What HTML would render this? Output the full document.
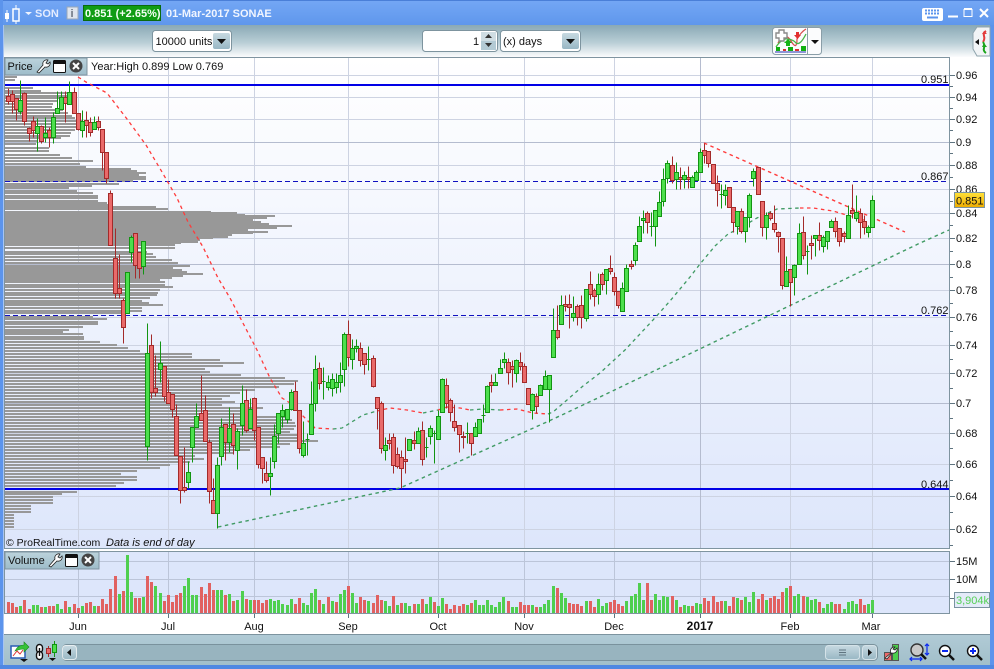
<!DOCTYPE html>
<html lang="en">
<head>
<meta charset="utf-8">
<title>SON chart</title>
<style>
html,body{margin:0;padding:0;background:#fff;width:994px;height:669px;overflow:hidden}
svg{display:block;font-family:"Liberation Sans",Arial,sans-serif}
text{font-size:11px;fill:#111}
.b{font-weight:bold}
</style>
</head>
<body>
<svg width="994" height="669" viewBox="0 0 994 669" xmlns="http://www.w3.org/2000/svg">
<defs>
<linearGradient id="tb" x1="0" y1="0" x2="0" y2="1"><stop offset="0" stop-color="#74a7f5"/><stop offset="1" stop-color="#5f97ec"/></linearGradient>
<linearGradient id="tool" x1="0" y1="0" x2="0" y2="1"><stop offset="0" stop-color="#8aa9b5"/><stop offset=".55" stop-color="#b9ced6"/><stop offset="1" stop-color="#fbfcfd"/></linearGradient>
<linearGradient id="bg" x1="0" y1="0" x2="0" y2="1"><stop offset="0" stop-color="#ffffff"/><stop offset="1" stop-color="#dde6fb"/></linearGradient>
<linearGradient id="leg" x1="0" y1="0" x2="0" y2="1"><stop offset="0" stop-color="#bcd3dc"/><stop offset="1" stop-color="#9dbcc9"/></linearGradient>
<linearGradient id="stat" x1="0" y1="0" x2="0" y2="1"><stop offset="0" stop-color="#b1cbd6"/><stop offset="1" stop-color="#a2bfca"/></linearGradient>
<linearGradient id="yel" x1="0" y1="0" x2="0" y2="1"><stop offset="0" stop-color="#ffe13a"/><stop offset="1" stop-color="#eeac00"/></linearGradient>
<linearGradient id="btn" x1="0" y1="0" x2="0" y2="1"><stop offset="0" stop-color="#c7d9e1"/><stop offset="1" stop-color="#98b7c4"/></linearGradient>
</defs>

<rect width="994" height="669" fill="#fff"/>
<!-- title bar -->
<rect width="994" height="25" fill="url(#tb)"/>
<rect width="994" height="1" fill="#4a7fd8"/>
<!-- window borders -->
<rect x="0" y="0" width="3" height="669" fill="#5c94ec"/>
<rect x="3" y="25" width="1" height="640" fill="#a7c4f2"/>
<rect x="990" y="25" width="4" height="644" fill="#5c94ec"/>
<rect x="0" y="665" width="994" height="4" fill="#4f88e2"/>
<!-- toolbar -->
<rect x="4" y="25" width="986" height="32" fill="url(#tool)"/>

<!-- title contents -->
<path d="M5 13h4v6H5zM8 15h1" fill="#fff"/>
<path d="M7 10v12" stroke="#fff"/>
<path d="M13 9h6v12h-6z" fill="none" stroke="#fff" stroke-width="1.500"/>
<path d="M16 5v4M16 21v3" stroke="#fff"/>
<path d="M25 12h7l-3.500 3z" fill="#eef3ff"/>
<text x="35" y="17" class="b" style="font-size:11px;fill:#e4ecff">SON</text>
<rect x="67" y="7" width="11" height="12" fill="#dfe5ee" stroke="#9aa8b8"/>
<text x="70.500" y="17" class="b" style="font-size:11px;fill:#6a7380">i</text>
<rect x="83.500" y="5.500" width="77" height="15" fill="#0f9c14" stroke="#0a6a0e"/>
<text x="85" y="17" class="b" style="font-size:11px;fill:#f3fff3">0.851 (+2.65%)</text>
<text x="166" y="17" class="b" style="font-size:11px;fill:#f0f5ff">01-Mar-2017 SONAE</text>
<!-- keyboard -->
<rect x="922" y="8" width="21" height="13" rx="2" fill="#fff"/>
<path d="M925 10.500h15M925 13.500h15" stroke="#5c94ec" stroke-width="2" stroke-dasharray="2 1"/>
<path d="M927 17.500h11" stroke="#5c94ec" stroke-width="2"/>
<path d="M948 16.500h10" stroke="#fff" stroke-width="2"/>
<rect x="964" y="9.500" width="8" height="7" fill="none" stroke="#fff"/>
<path d="M964 9h8" stroke="#fff" stroke-width="2"/>
<path d="M980 9l8 8M988 9l-8 8" stroke="#fff" stroke-width="2"/>

<!-- toolbar controls -->
<rect x="152.500" y="30.500" width="79" height="21" rx="3" fill="#fff" stroke="#7d949f"/>
<text x="155.500" y="45" style="font-size:11px">10000 units</text>
<rect x="213" y="33" width="17" height="16" rx="2" fill="url(#btn)"/>
<path d="M217 39h9l-4.500 5z" fill="#111"/>
<rect x="422.500" y="30.500" width="75" height="21" rx="3" fill="#fff" stroke="#7d949f"/>
<text x="473" y="45" style="font-size:11px">1</text>
<rect x="481" y="32" width="15" height="9" fill="#cfdde3"/><rect x="481" y="41" width="15" height="9" fill="#b3cad4"/>
<path d="M485 38h7l-3.500-4zM485 43h7l-3.500 4z" fill="#333"/>
<rect x="500.500" y="30.500" width="80" height="21" rx="3" fill="#fff" stroke="#7d949f"/>
<text x="503" y="45" style="font-size:11px">(x) days</text>
<rect x="562" y="33" width="17" height="16" rx="2" fill="url(#btn)"/>
<path d="M566 39h9l-4.500 5z" fill="#111"/>
<!-- indicator button -->
<rect x="772.500" y="27.500" width="49" height="27" rx="3" fill="#fbfcfd" stroke="#8a9ea8"/>
<path d="M807.500 28v26" stroke="#8a9ea8"/>
<path d="M778 43q7-12 13-2t6-2q4-7 9-10" fill="none" stroke="#d84f4f" stroke-width="1.300"/>
<path d="M776 47q6-9 12-8t8 4q4 3 10-9" fill="none" stroke="#47b447" stroke-width="1.300"/>
<path d="M776 33h3v-3h5v3h3v5h-3v3h-5v-3h-3z" fill="#fff" stroke="#8a8a8a" stroke-width="1.400"/>
<path d="M786 46v-3h-2l4-4 4 4h-2v3z" fill="#18b418"/>
<path d="M796 32h3v3h2l-3.500 4-3.500-4h2z" fill="#e23030"/>
<path d="M776 47h4v4h-4zM788 47h5v4h-5zM801 46h5v5h-5z" fill="#10b010"/>
<path d="M783 49h3v2h-3zM795 49h4v2h-4z" fill="#d83030"/>
<path d="M775 52h31" stroke="#2030b0"/>
<path d="M811 40h8l-4 4z" fill="#111"/>
<!-- right tab -->
<path d="M990 27h-13l-4 6v16l4 7h13z" fill="#f1f4f6" stroke="#8fa4ad"/>
<path d="M979 39l-4 3 4 3z" fill="#111"/>
<path d="M986 31q-3 2-2 5t-1 6" fill="none" stroke="#e23b3b" stroke-width="2"/>
<path d="M982 34l2-3 3 3" fill="#e23b3b"/>
<path d="M986 53q-3-2-2-5t-1-6" fill="none" stroke="#1ca51c" stroke-width="2"/>
<path d="M982 47l2-4 3 4" fill="#1ca51c"/>

<!-- price panel -->
<rect x="5" y="58" width="945" height="490" fill="url(#bg)"/>
<g stroke="#cdd3e2" fill="none">
<path d="M5 75.500H950M5 97.500H950M5 119.500H950M5 165.500H950M5 189.500H950M5 213.500H950M5 238.500H950M5 290.500H950M5 317.500H950M5 345.500H950M5 373.500H950M5 433.500H950M5 464.500H950M5 496.500H950M5 529.500H950"/>
<path d="M78.500 58V548M168.500 58V548M254.500 58V548M348.500 58V548M438.500 58V548M524.500 58V548M614.500 58V548M790.500 58V548M872.500 58V548"/>
</g>
<g stroke="#b5bccf" fill="none"><path d="M5 142.500H950M5 264.500H950M5 403.500H950M700.500 58V548"/></g>

<!-- volume profile -->
<path fill="none" stroke="#989898" stroke-width="2" shape-rendering="crispEdges" d="M5 77H17M5 80H15M5 88H33M5 91H41M5 93H67M5 96H67M5 98H60M5 101H57M5 104H53M5 107H52M5 110H63M5 113H68M5 116H72M5 118H75M5 121H83M5 124H82M5 127H78M5 130H75M5 133H71M5 136H70M5 138H61M5 141H37M5 144H36M5 148H49M5 151H49M5 155H60M5 158H72M5 161H93M5 164H80M5 167H86M5 169H131M5 171H137M5 173H146M5 175H139M5 177H146M5 179H146M5 181H133M5 184H119M5 186H92M5 188H69M5 191H77M5 193H93M5 196H98M5 198H98M5 201H98M5 203H107M5 205H110M5 207H156M5 209H168M5 212H211M5 213H237M5 215H245M5 216H275M5 218H267M5 220H253M5 222H261M5 224H269M5 226H292M5 228H277M5 230H248M5 232H268M5 233H253M5 235H232M5 237H228M5 238H213M5 240H200M5 242H198M5 243H181M5 245H175M5 248H175M5 252H147M5 254H153M5 257H156M5 260H172M5 263H178M5 266H190M5 268H173M5 270H182M5 272H187M5 274H203M5 276H183M5 278H172M5 280H160M5 282H165M5 285H165M5 287H173M5 290H160M5 293H158M5 295H157M5 298H150M5 301H142M5 303H149M5 305H163M5 308H142M5 311H142M5 313H122M5 317H93M5 319H107M5 322H98M5 324H98M5 327H83M5 330H69M5 332H63M5 334H83M5 337H84M5 339H84M5 342H100M5 345H117M5 348H128M5 351H140M5 354H192M5 357H192M5 360H220M5 363H244M5 366H223M5 369H205M5 372H210M5 375H241M5 378H285M5 381H298M5 384H294M5 387H279M5 390H255M5 393H240M5 396H230M5 399H222M5 402H235M5 405H222M5 408H263M5 411H255M5 414H240M5 417H285M5 420H292M5 423H295M5 426H296M5 429H294M5 432H290M5 435H297M5 438H298M5 441H318M5 444H290M5 447H280M5 450H250M5 453H233M5 456H195M5 459H204M5 462H190M5 465H170M5 468H160M5 471H137M5 474H121M5 477H137M5 480H137M5 483H124M5 486H116M5 492H77M5 494H62M5 497H53M5 500H53M5 503H53M5 506H31M5 509H31M5 512H31M5 515H14M5 518H14M5 521H14M5 524H14M5 527H14"/>

<!-- horizontals -->
<path d="M5 181.500H950M5 315.500H950" stroke="#1010c0" stroke-dasharray="5 3" fill="none"/>
<path d="M5 85H950M5 489H950" stroke="#0000e6" stroke-width="2" fill="none"/>

<!-- dashed moving averages and trends -->
<g fill="none" stroke-width="1.300" stroke-dasharray="3.500 3.500">
<path stroke="#ff3b3b" d="M78 77L86 82L107 93L127 119L146 145L162 172L177 198L188 222L203 247L218 278L230 298L245 327L257 350L270 378L282 398L290 403L297 410L304 417L311 424L315 428L333 429"/>
<path stroke="#3f9a63" d="M333 429L342 428L355 420L363 415L377 411"/>
<path stroke="#ff3b3b" d="M377 411L390 408L407 410L423 413"/>
<path stroke="#3f9a63" d="M423 413L438 410"/>
<path stroke="#ff3b3b" d="M438 410L447 407L460 408L470 410"/>
<path stroke="#3f9a63" d="M470 410L483 409L500 410"/>
<path stroke="#ff3b3b" d="M500 410L517 409L533 413L548 414"/>
<path stroke="#3f9a63" d="M548 414L553 412L567 400L583 386L600 373L625 350L653 320L670 301L690 277L700 264L715 246L728 234L740 228L757 218L770 212L777 209L800 208"/>
<path stroke="#ff3b3b" d="M800 208L813 208L833 211L850 216L867 221"/>
<path stroke="#3f9a63" stroke-width="1.400" d="M218 527L400 488L549 421L600 397L760 320L918 244L949 230"/>
<path stroke="#ff3b3b" stroke-width="1.400" d="M704 143L905 232"/>
</g>
<path d="M704.500 143v8" stroke="#ff3b3b"/>

<!-- candles -->
<g transform="translate(.5 .5)" shape-rendering="crispEdges">
<path fill="none" stroke="#a32a2a" d="M8 88V104M12 90V113M16 98V120M24 92V125M29 127V141M33 116V137M41 125V143M49 127V147M65 91V122M74 87V113M78 113V130M86 111V137M90 117V136M98 116V130M102 129V170M106 152V183M110 190V245M115 228V298M119 254V298M123 298V343M135 233V278M139 252V278M151 334V398M155 355V396M164 366V401M168 379V403M172 394V417M176 404V455M180 456V503M184 447V492M201 375V420M205 395V441M209 439V503M213 478V513M225 424V460M233 413V454M246 389V432M254 397V440M258 427V468M262 457V483M266 461V482M295 381V410M299 410V453M319 362V389M348 320V366M360 342V366M364 353V374M373 355V387M377 397V429M381 401V453M389 433V449M393 433V473M397 447V468M401 450V488M405 437V473M414 431V449M422 421V465M446 378V408M450 398V421M454 404V431M459 425V452M463 431V448M471 433V455M491 374V392M508 358V384M512 360V387M520 352V370M524 363V382M528 388V404M536 393V413M557 305V339M565 295V311M569 294V328M577 304V325M581 295V328M590 271V299M594 288V306M602 272V290M610 255V274M614 272V295M618 291V308M631 260V269M647 211V233M672 156V183M680 167V189M688 166V188M704 143V163M708 151V167M713 164V183M717 175V206M729 187V207M733 207V232M741 208V233M758 167V194M762 201V236M770 211V220M774 205V232M778 231V252M782 238V289M790 269V306M803 216V259M811 235V259M819 222V250M835 217V237M839 228V246M844 231V242M852 184V218M860 208V238M864 215V234"/>
<path fill="none" stroke="#129412" d="M20 80V114M37 118V151M45 117V142M53 112V143M57 91V113M61 91V109M69 81V104M82 110V137M94 116V129M131 235V262M143 241V274M147 323V460M160 341V382M188 461V488M192 427V462M196 403V427M217 457V528M221 418V465M229 407V452M237 428V469M242 385V435M250 398V428M270 457V495M274 424V468M278 413V443M282 404V427M287 409V423M291 389V410M303 421V457M307 433V455M311 381V434M315 355V411M323 367V399M328 375V390M332 373V396M336 373V393M340 362V392M344 332V386M352 339V369M356 339V352M368 346V370M385 437V460M418 427V443M426 437V457M430 425V444M434 430V463M438 410V439M442 378V412M467 422V443M475 422V436M483 404V422M487 385V412M495 373V385M500 359V373M504 352V368M516 359V382M532 393V419M540 384V395M545 370V389M549 375V422M553 308V357M561 295V324M573 296V321M586 289V321M598 273V304M606 269V294M622 282V311M626 264V291M635 242V265M639 216V241M643 210V233M651 212V236M655 210V246M659 191V216M663 168V206M667 160V183M676 162V189M684 171V188M692 175V187M696 170V180M700 148V172M721 184V208M725 184V205M737 211V234M745 217V242M749 193V227M753 168V186M766 212V239M786 256V286M794 264V295M799 223V264M807 245V274M815 235V256M823 235V252M827 231V249M831 219V227M848 205V238M856 195V221M868 225V237M872 195V227M305 439h4M321 381h4M366 359h4M424 447h4M432 433h4M465 433h4M481 415h4M649 226h4M719 194h4M805 251h4"/>
<path fill="#e96a6a" stroke="#a32a2a" d="M6 96h4V101h-4zM10 94h4V101h-4zM14 98h4V109h-4zM22 93h4V121h-4zM27 128h4V133h-4zM31 121h4V130h-4zM39 126h4V141h-4zM47 130h4V137h-4zM63 97h4V103h-4zM72 92h4V113h-4zM76 113h4V129h-4zM84 120h4V125h-4zM88 122h4V132h-4zM96 121h4V127h-4zM100 129h4V152h-4zM104 152h4V178h-4zM108 193h4V245h-4zM113 258h4V293h-4zM117 288h4V293h-4zM121 300h4V327h-4zM133 233h4V265h-4zM137 252h4V268h-4zM149 345h4V392h-4zM153 388h4V392h-4zM162 366h4V396h-4zM166 392h4V403h-4zM170 394h4V409h-4zM174 416h4V455h-4zM178 456h4V490h-4zM182 487h4V490h-4zM199 413h4V420h-4zM203 410h4V441h-4zM207 442h4V491h-4zM211 500h4V513h-4zM223 424h4V442h-4zM231 424h4V445h-4zM244 400h4V430h-4zM252 398h4V430h-4zM256 427h4V464h-4zM260 457h4V468h-4zM264 473h4V480h-4zM293 391h4V410h-4zM297 410h4V448h-4zM317 368h4V383h-4zM346 334h4V357h-4zM358 348h4V360h-4zM362 353h4V364h-4zM371 358h4V386h-4zM375 397h4V408h-4zM379 403h4V448h-4zM387 440h4V443h-4zM391 437h4V465h-4zM395 454h4V466h-4zM399 457h4V468h-4zM403 459h4V461h-4zM412 440h4V443h-4zM420 430h4V459h-4zM444 385h4V403h-4zM448 400h4V412h-4zM452 421h4V427h-4zM457 425h4V434h-4zM461 436h4V437h-4zM469 433h4V443h-4zM489 382h4V385h-4zM506 362h4V372h-4zM510 366h4V369h-4zM518 362h4V366h-4zM522 366h4V382h-4zM526 388h4V404h-4zM534 396h4V406h-4zM555 330h4V337h-4zM563 304h4V306h-4zM567 304h4V307h-4zM575 306h4V317h-4zM579 305h4V317h-4zM588 284h4V294h-4zM592 290h4V296h-4zM600 274h4V284h-4zM608 268h4V271h-4zM612 277h4V291h-4zM616 291h4V305h-4zM629 264h4V266h-4zM645 213h4V222h-4zM670 165h4V180h-4zM678 177h4V179h-4zM686 177h4V179h-4zM702 150h4V155h-4zM706 151h4V163h-4zM711 164h4V183h-4zM715 183h4V190h-4zM727 187h4V207h-4zM731 207h4V222h-4zM739 211h4V231h-4zM756 167h4V194h-4zM760 201h4V227h-4zM768 213h4V218h-4zM772 223h4V229h-4zM776 232h4V236h-4zM780 238h4V285h-4zM788 269h4V282h-4zM801 232h4V255h-4zM809 243h4V245h-4zM817 235h4V240h-4zM833 221h4V231h-4zM837 228h4V241h-4zM842 233h4V236h-4zM850 210h4V213h-4zM858 213h4V222h-4zM862 221h4V227h-4z"/>
<path fill="#4ddf4d" stroke="#129412" d="M18 100h4V111h-4zM35 126h4V133h-4zM43 133h4V137h-4zM51 117h4V137h-4zM55 108h4V113h-4zM59 97h4V109h-4zM67 92h4V104h-4zM80 121h4V130h-4zM92 122h4V129h-4zM125 272h4V313h-4zM129 237h4V252h-4zM141 241h4V266h-4zM145 353h4V446h-4zM158 363h4V369h-4zM186 472h4V482h-4zM190 427h4V447h-4zM194 416h4V427h-4zM215 465h4V513h-4zM219 427h4V456h-4zM227 428h4V442h-4zM235 431h4V450h-4zM240 403h4V425h-4zM248 409h4V428h-4zM268 473h4V476h-4zM272 436h4V461h-4zM276 413h4V433h-4zM280 410h4V416h-4zM285 409h4V419h-4zM289 392h4V409h-4zM301 443h4V455h-4zM309 404h4V434h-4zM313 369h4V403h-4zM326 382h4V387h-4zM330 379h4V388h-4zM334 382h4V387h-4zM338 375h4V382h-4zM342 334h4V369h-4zM350 348h4V359h-4zM354 346h4V348h-4zM383 445h4V450h-4zM407 439h4V450h-4zM416 431h4V443h-4zM428 428h4V436h-4zM436 416h4V439h-4zM440 379h4V412h-4zM473 427h4V436h-4zM477 419h4V433h-4zM485 386h4V412h-4zM493 382h4V385h-4zM498 368h4V373h-4zM502 359h4V362h-4zM514 360h4V373h-4zM530 394h4V410h-4zM538 385h4V395h-4zM543 376h4V389h-4zM547 375h4V389h-4zM551 330h4V357h-4zM559 305h4V324h-4zM571 313h4V317h-4zM584 289h4V318h-4zM596 284h4V294h-4zM604 269h4V280h-4zM620 288h4V311h-4zM624 268h4V291h-4zM633 245h4V260h-4zM637 226h4V241h-4zM641 218h4V220h-4zM653 210h4V226h-4zM657 202h4V216h-4zM661 179h4V201h-4zM665 163h4V178h-4zM674 172h4V179h-4zM682 175h4V179h-4zM690 177h4V187h-4zM694 172h4V180h-4zM698 152h4V172h-4zM723 190h4V195h-4zM735 211h4V226h-4zM743 217h4V231h-4zM747 195h4V217h-4zM751 171h4V178h-4zM764 215h4V227h-4zM784 271h4V286h-4zM792 265h4V277h-4zM797 233h4V264h-4zM813 235h4V238h-4zM821 237h4V246h-4zM825 231h4V241h-4zM829 221h4V227h-4zM846 215h4V238h-4zM854 212h4V218h-4zM866 227h4V232h-4zM870 200h4V227h-4z"/>
</g>

<!-- labels on chart -->
<text x="921" y="83">0.951</text>
<text x="921" y="180">0.867</text>
<text x="921" y="314">0.762</text>
<text x="921" y="488">0.644</text>
<text x="6" y="546" style="font-size:10.500px">© ProRealTime.com</text>
<text x="106" y="546" style="font-size:11px;font-style:italic">Data is end of day</text>

<!-- price panel frame -->
<rect x="4.500" y="57.500" width="945" height="491" fill="none" stroke="#7f94a0"/>
<rect x="4" y="548" width="946" height="1" fill="#7f94a0"/>

<!-- legend -->
<rect x="5" y="58" width="82" height="17" fill="url(#leg)" stroke="#7f94a0"/>
<text x="7.500" y="70" style="font-size:11px">Price</text>
<path d="M37 72l6-7a4 4 0 0 1 5-5l-2 3 2 1 2-2a4 4 0 0 1-5 5l-6 6z" fill="#fff" stroke="#222" stroke-width=".8"/>
<rect x="53.500" y="60.500" width="12" height="12" rx="1" fill="#fff" stroke="#111"/><rect x="54" y="60" width="11" height="4" fill="#111"/>
<circle cx="76" cy="66" r="6.500" fill="#444"/><path d="M73 63l6 6M79 63l-6 6" stroke="#fff" stroke-width="2"/>
<text x="91" y="70" style="font-size:11px">Year:High 0.899 Low 0.769</text>

<!-- volume panel -->
<rect x="5" y="552" width="945" height="61" fill="#dde6fb"/>
<path d="M5 561.500H950M5 579.500H950M5 596.500H950M78.500 552V613M168.500 552V613M254.500 552V613M348.500 552V613M438.500 552V613M524.500 552V613M614.500 552V613M700.500 552V613M790.500 552V613M872.500 552V613" stroke="#bcc5d9" fill="none"/>
<g transform="translate(.5 0)" stroke-width="3" fill="none" shape-rendering="crispEdges">
<path stroke="#e16161" d="M8 613v-11M12 613v-10M16 613v-6M24 613v-13M29 613v-4M41 613v-6M49 613v-7M53 613v-7M65 613v-12M74 613v-9M78 613v-5M86 613v-10M90 613v-11M98 613v-7M102 613v-14M106 613v-9M110 613v-24M115 613v-37M123 613v-22M135 613v-15M139 613v-15M147 613v-37M151 613v-31M164 613v-12M168 613v-18M172 613v-11M176 613v-18M180 613v-20M201 613v-26M205 613v-19M209 613v-30M213 613v-23M225 613v-18M233 613v-12M246 613v-14M254 613v-13M258 613v-13M262 613v-10M266 613v-13M295 613v-9M299 613v-15M319 613v-13M328 613v-16M336 613v-11M348 613v-27M360 613v-16M364 613v-13M373 613v-10M377 613v-18M381 613v-13M393 613v-17M401 613v-10M414 613v-9M422 613v-14M434 613v-11M446 613v-9M450 613v-4M454 613v-8M459 613v-7M463 613v-9M471 613v-10M508 613v-12M520 613v-11M524 613v-8M528 613v-8M536 613v-6M557 613v-25M569 613v-10M573 613v-9M577 613v-9M581 613v-7M590 613v-12M594 613v-6M610 613v-11M614 613v-13M618 613v-9M622 613v-7M647 613v-30M651 613v-13M672 613v-17M680 613v-6M692 613v-7M704 613v-15M708 613v-12M713 613v-17M717 613v-11M721 613v-12M729 613v-7M733 613v-16M741 613v-13M758 613v-14M762 613v-19M770 613v-15M774 613v-17M778 613v-14M782 613v-21M790 613v-27M803 613v-17M819 613v-11M835 613v-9M839 613v-9M860 613v-14M864 613v-8"/>
<path stroke="#4fcf4f" d="M20 613v-7M33 613v-8M37 613v-8M45 613v-6M57 613v-9M61 613v-4M69 613v-6M82 613v-7M94 613v-7M119 613v-19M127 613v-58M131 613v-21M143 613v-16M155 613v-27M160 613v-20M184 613v-27M188 613v-35M192 613v-18M196 613v-18M217 613v-23M221 613v-23M229 613v-19M237 613v-13M242 613v-22M250 613v-13M270 613v-14M274 613v-12M278 613v-13M282 613v-9M287 613v-8M291 613v-14M303 613v-10M307 613v-8M311 613v-20M315 613v-24M323 613v-9M332 613v-12M340 613v-19M344 613v-23M352 613v-20M356 613v-10M368 613v-12M385 613v-12M389 613v-7M397 613v-8M405 613v-10M409 613v-7M418 613v-9M426 613v-9M430 613v-16M438 613v-7M442 613v-15M467 613v-8M475 613v-13M479 613v-8M483 613v-8M487 613v-13M491 613v-8M495 613v-6M499 613v-11M503 613v-16M512 613v-6M516 613v-6M532 613v-8M540 613v-6M544 613v-9M548 613v-13M553 613v-27M561 613v-20M565 613v-15M586 613v-12M598 613v-14M602 613v-7M606 613v-10M626 613v-12M631 613v-17M635 613v-19M639 613v-30M643 613v-13M655 613v-19M659 613v-13M663 613v-17M667 613v-16M676 613v-13M684 613v-8M688 613v-7M696 613v-10M700 613v-9M725 613v-12M737 613v-15M745 613v-16M749 613v-11M753 613v-21M766 613v-13M786 613v-25M794 613v-17M798 613v-19M807 613v-16M811 613v-13M815 613v-14M823 613v-5M827 613v-9M831 613v-11M844 613v-4M848 613v-11M852 613v-12M856 613v-9M868 613v-9M872 613v-13"/>
</g>
<rect x="4.500" y="551.500" width="945" height="62" fill="none" stroke="#7f94a0"/>
<rect x="5" y="552" width="94" height="17" fill="url(#leg)" stroke="#7f94a0"/>
<text x="8" y="564" style="font-size:11px">Volume</text>
<path d="M49 566l6-7a4 4 0 0 1 5-5l-2 3 2 1 2-2a4 4 0 0 1-5 5l-6 6z" fill="#fff" stroke="#222" stroke-width=".8"/>
<rect x="65.500" y="554.500" width="12" height="12" rx="1" fill="#fff" stroke="#111"/><rect x="66" y="554" width="11" height="4" fill="#111"/>
<circle cx="88" cy="560" r="6.500" fill="#444"/><path d="M85 557l6 6M91 557l-6 6" stroke="#fff" stroke-width="2"/>

<!-- price axis -->
<path stroke="#5f7480" fill="none" d="M950 75.500h5M950 97.500h5M950 119.500h5M950 142.500h5M950 165.500h5M950 189.500h5M950 213.500h5M950 238.500h5M950 264.500h5M950 290.500h5M950 317.500h5M950 345.500h5M950 373.500h5M950 403.500h5M950 433.500h5M950 464.500h5M950 496.500h5M950 529.500h5M950 86.500h3M950 108.500h3M950 130.500h3M950 153.500h3M950 177.500h3M950 201.500h3M950 225.500h3M950 251.500h3M950 277.500h3M950 303.500h3M950 331.500h3M950 359.500h3M950 388.500h3M950 418.500h3M950 448.500h3M950 480.500h3M950 512.500h3M950 545.500h3M950 561.500h5M950 579.500h5M950 598.500h4"/>
<g style="font-size:11px">
<text x="956" y="79">0.96</text><text x="956" y="101">0.94</text><text x="956" y="123">0.92</text>
<text x="956" y="146">0.9</text><text x="956" y="169">0.88</text><text x="956" y="193">0.86</text>
<text x="956" y="217">0.84</text><text x="956" y="242">0.82</text><text x="956" y="268">0.8</text>
<text x="956" y="294">0.78</text><text x="956" y="321">0.76</text><text x="956" y="349">0.74</text>
<text x="956" y="377">0.72</text><text x="956" y="407">0.7</text><text x="956" y="437">0.68</text>
<text x="956" y="468">0.66</text><text x="956" y="500">0.64</text><text x="956" y="533">0.62</text>
<text x="956" y="565">15M</text><text x="956" y="583">10M</text>
</g>
<rect x="954.500" y="192.500" width="30" height="15" fill="url(#yel)" stroke="#7a93a0"/>
<text x="956" y="204.500" style="font-size:11px">0.851</text>
<rect x="954.500" y="592.500" width="35" height="15" fill="#e4ebf9" stroke="#7a93a0"/>
<text x="956" y="604" style="font-size:11px;fill:#55d155">3,904k</text>

<!-- x axis -->
<path stroke="#5f7480" fill="none" d="M78.500 614v4M168.500 614v4M254.500 614v4M348.500 614v4M438.500 614v4M524.500 614v4M614.500 614v4M700.500 614v4M790.500 614v4M872.500 614v4"/>
<g text-anchor="middle" style="font-size:11px">
<text x="78" y="630">Jun</text><text x="168" y="630">Jul</text><text x="254" y="630">Aug</text><text x="348" y="630">Sep</text><text x="438" y="630">Oct</text><text x="524" y="630">Nov</text><text x="614" y="630">Dec</text><text x="700" y="630" class="b" style="font-size:12px">2017</text><text x="790" y="630">Feb</text><text x="871" y="630">Mar</text>
</g>

<!-- status bar -->
<rect x="4" y="634" width="986" height="31" fill="url(#stat)"/>
<rect x="4" y="634" width="986" height="1" fill="#7d949f"/>
<rect x="62.500" y="644.500" width="815" height="16" rx="4" fill="#98b4bf" stroke="#7a929d"/>
<rect x="62.500" y="645.500" width="14" height="14" rx="3" fill="url(#btn)" stroke="#fff" stroke-opacity=".7"/>
<path d="M71 649v7l-4-3.500z" fill="#111"/>
<rect x="825.500" y="645.500" width="34" height="14" rx="3" fill="url(#btn)" stroke="#d4e2e8"/>
<path d="M839 650h7M839 652.500h7M839 655h7" stroke="#5f7480"/>
<rect x="862.500" y="645.500" width="14" height="14" rx="3" fill="url(#btn)" stroke="#d4e2e8"/>
<path d="M868 649v7l4-3.500z" fill="#111"/>
<!-- left status icons -->
<rect x="11" y="646" width="14" height="12" fill="#fff" stroke="#2a5db5" stroke-width="1.500"/>
<path d="M13 656l4-5 3 3 3-4" fill="none" stroke="#d33"/>
<path d="M15 651q3-6 9-6v-3l5 5-5 5v-3q-4 0-9 2z" fill="#37c237" stroke="#1a8a1a" stroke-width=".6"/>
<path d="M20 659h8l-4 3z" fill="#111"/>
<rect x="36.500" y="644.500" width="6" height="8" rx="3" fill="#fff" stroke="#111" stroke-width="1.400"/>
<rect x="36.500" y="651.500" width="6" height="8" rx="3" fill="#fff" stroke="#111" stroke-width="1.400"/>
<path d="M39.500 648v8" stroke="#111" stroke-width="1.400"/>
<rect x="46.500" y="648.500" width="4" height="5" fill="#e96a6a" stroke="#a32a2a"/><path d="M48.500 646v2M48.500 654v3" stroke="#a32a2a"/>
<rect x="52.500" y="644.500" width="4" height="8" fill="#4ddf4d" stroke="#129412"/><path d="M54.500 641v3M54.500 653v4" stroke="#129412"/>
<path d="M49 658h7l-3.500 3z" fill="#111"/>
<!-- right status icons -->
<rect x="884.500" y="652.500" width="7" height="8" fill="#e96a6a" stroke="#555"/>
<rect x="892.500" y="644.500" width="6" height="16" fill="#4ccf4c" stroke="#555"/>
<path d="M885 658l6-5a4 4 0 0 1 4-6l-2 2 2 1 2-2a4 4 0 0 1-5 5l-5 6z" fill="#fff" stroke="#222" stroke-width=".8"/>
<circle cx="917" cy="650" r="6" fill="#c9c9c9" stroke="#333" stroke-width="1.400"/>
<path d="M921 654l5 5" stroke="#111" stroke-width="2.500"/>
<path d="M927 645v9M925 646l2-2 2 2M925 653l2 2 2-2M911 659h10M912 657l-2 2 2 2M920 657l2 2-2 2" fill="none" stroke="#0a28f0" stroke-width="1.200"/>
<circle cx="945" cy="651" r="5.500" fill="#fff" stroke="#111" stroke-width="1.400"/>
<path d="M942 651h6" stroke="#0a28f0" stroke-width="2"/>
<path d="M949 655l5 5" stroke="#111" stroke-width="2.500"/>
<circle cx="973" cy="651" r="5.500" fill="#fff" stroke="#111" stroke-width="1.400"/>
<path d="M970 651h6M973 648v6" stroke="#0a28f0" stroke-width="2"/>
<path d="M977 655l5 5" stroke="#111" stroke-width="2.500"/>
</svg>
</body>
</html>
